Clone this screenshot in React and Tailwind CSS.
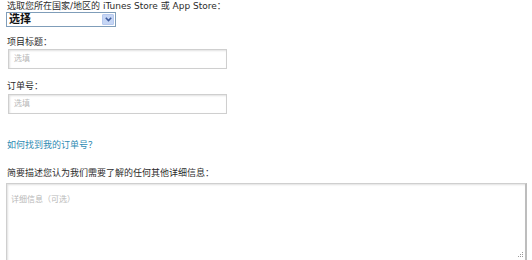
import React from 'react';

const font = { fontFamily: '"DejaVu Sans", "Noto Sans CJK SC", sans-serif' };

function Label({ children, className = '' }) {
  return (
    <div className={`h-[12px] text-[9px] leading-[12px] text-[#2b2b2b] whitespace-nowrap ${className}`}>{children}</div>
  );
}

function TextInput({ placeholder, className = '' }) {
  return (
    <div className={`ml-[1px] w-[219px] h-[20px] border border-[#cfcfcf] bg-white shadow-[inset_1px_1px_2px_rgba(0,0,0,0.12)] flex items-center px-[5px] ${className}`}>
      <span className="text-[8px] leading-[10px] text-[#b8b8b8]">{placeholder}</span>
    </div>
  );
}

export default function App() {
  return (
    <div className="w-[532px] h-[260px] overflow-hidden bg-white pl-[7px]" style={font}>
      <Label>选取您所在国家/地区的 iTunes Store 或 App Store：</Label>

      {/* 下拉框 */}
      <div className="-ml-[1px] w-[110px] h-[15px] border border-[#7f9db9] bg-white flex items-stretch overflow-hidden">
        <span className="flex-1 pl-[2px] flex items-center text-[11px] leading-[13px] font-bold text-[#111]">选择</span>
        <span className="w-[12px] m-[1px] rounded-[1px] bg-[#c6d6f5] border border-[#b6c9ee] flex items-center justify-center">
          <svg width="7" height="5" viewBox="0 0 7 5">
            <path d="M0.8 0.8 L3.5 3.6 L6.2 0.8" fill="none" stroke="#3d5c9e" strokeWidth="1.6" />
          </svg>
        </span>
      </div>

      <Label className="mt-[9px]">项目标题：</Label>
      <TextInput placeholder="选填" className="mt-[1px]" />

      <Label className="mt-[11px]">订单号：</Label>
      <TextInput placeholder="选填" className="mt-[2px]" />

      <a className="block h-[12px] mt-[25px] text-[9px] leading-[12px] text-[#2f8bb3]">如何找到我的订单号？</a>

      <Label className="mt-[16px]">简要描述您认为我们需要了解的任何其他详细信息：</Label>

      <div className="relative -ml-[1px] mt-[4px] w-[521px] h-[120px] border border-[#cfcfcf] border-r-[2px] border-r-[#bdbdbd] shadow-[inset_1px_1px_2px_rgba(0,0,0,0.12)] bg-white px-[4px] pt-[1px]">
        <span className="text-[8px] leading-[12px] text-[#b8b8b8]">详细信息（可选）</span>
        <svg className="absolute right-[1px] top-[66px]" width="8" height="8" viewBox="0 0 8 8">
          <rect x="6" y="2" width="1" height="1" fill="#999" />
          <rect x="4" y="4" width="1" height="1" fill="#999" />
          <rect x="6" y="4" width="1" height="1" fill="#999" />
          <rect x="2" y="6" width="1" height="1" fill="#999" />
          <rect x="4" y="6" width="1" height="1" fill="#999" />
          <rect x="6" y="6" width="1" height="1" fill="#999" />
        </svg>
      </div>
    </div>
  );
}
